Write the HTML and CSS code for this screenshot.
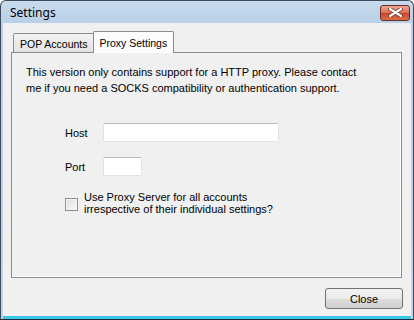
FILE: index.html
```html
<!doctype html>
<html lang="en">
<head>
    <meta charset="UTF-8">
    <title>Settings</title>
    <link rel="stylesheet" href="styles.css">
</head>
<body>
<div class="window">
    <div class="titlebar">
        <span class="title">Settings</span>
        <span class="close-x">
            <svg width="15" height="9" viewBox="0 0 15 9">
                <path d="M2 1 L13 8 M13 1 L2 8" stroke="#5a2a22" stroke-width="3.6" stroke-linecap="round"/>
                <path d="M2 1 L13 8 M13 1 L2 8" stroke="#fff" stroke-width="2.2" stroke-linecap="round"/>
            </svg>
        </span>
    </div>
    <div class="client">
        <div class="tabs">
            <div class="tab">POP Accounts</div>
            <div class="tab active">Proxy Settings</div>
        </div>
        <div class="panel">
            <p class="note">This version only contains support for a HTTP proxy. Please contact<br>me if you need a SOCKS compatibility or authentication support.</p>
            <div class="form">
                <label class="lbl">Host</label>
                <input class="field host" type="text">
                <label class="lbl">Port</label>
                <input class="field port" type="text">
                <span class="box"></span>
                <span class="check-text">Use Proxy Server for all accounts<br>irrespective of their individual settings?</span>
            </div>
        </div>
        <div class="footer">
            <button class="btn">Close</button>
        </div>
    </div>
</div>
</body>
</html>
```

FILE: styles.css
```css
body {
    margin: 0;
    font-family: "Liberation Sans", Arial, sans-serif;
    font-size: 11px;
    color: #000;
}

.window {
    width: 414px;
    height: 320px;
    box-sizing: border-box;
    border: 1px solid #3d4a5a;
    border-bottom-color: #1c2a38;
    border-radius: 6px 6px 0 0;
    background: linear-gradient(#c9dbee, #b9cfe7 22px, #bfd5ec 100%);
    display: flex;
    flex-direction: column;
    padding: 0 2px 0 2px;
}

.titlebar {
    height: 22px;
    display: flex;
    align-items: center;
    justify-content: space-between;
    padding: 0 1px 0 7px;
}

.title {
    font-family: "Noto Sans", "Liberation Sans", sans-serif;
    font-size: 12px;
    margin-top: 1px;
}

.close-x {
    width: 28px;
    height: 14px;
    border: 1px solid #6b2a22;
    border-radius: 3px;
    background: linear-gradient(#eba995, #d86d51 50%, #c8442a 51%, #d9704f);
    display: flex;
    align-items: center;
    justify-content: center;
    margin-top: 1px;
}

.client {
    flex: 1;
    background: #f0f0f0;
    border-bottom: 3px solid #3bc6ea;
    padding: 8px 8px 0 8px;
    display: flex;
    flex-direction: column;
}

.tabs {
    display: flex;
    align-items: flex-end;
    padding-left: 2px;
    height: 21px;
    position: relative;
    z-index: 1;
}

.tab {
    height: 19px;
    box-sizing: border-box;
    border: 1px solid #898c95;
    border-bottom: none;
    border-radius: 2px 2px 0 0;
    background: linear-gradient(#f3f3f3, #e3e3e3);
    padding: 3px 6px 0 6px;
    line-height: 14px;
    font-size: 10.5px;
    white-space: nowrap;
}

.tab.active {
    height: 22px;
    background: #fcfcfc;
    margin-left: -2px;
    margin-bottom: -1px;
    padding: 4px 6px 0 6px;
}

.panel {
    height: 226px;
    box-sizing: border-box;
    border: 1px solid #898c95;
    box-shadow: inset -1px -1px 0 #fff;
    padding: 11px 14px 0 14px;
    margin-right: 1px;
}

.note {
    margin: 0;
    line-height: 16px;
    font-size: 11px;
}

.form {
    display: grid;
    grid-template-columns: 38px auto;
    align-items: center;
    justify-items: start;
    row-gap: 15px;
    margin: 27px 0 0 39px;
}

.lbl {
    font-size: 11px;
}

.field {
    box-sizing: border-box;
    height: 19px;
    margin: 0;
    border: 1px solid #dfe3e8;
    border-top-color: #b5b9c0;
    border-radius: 2px;
    background: #fff;
    padding: 0;
}

.host {
    width: 176px;
}

.port {
    width: 39px;
}

.box {
    width: 13px;
    height: 13px;
    box-sizing: border-box;
    border: 1px solid #8f8f8f;
    background: linear-gradient(135deg, #dcdcdc, #fafafa);
    box-shadow: inset 0 0 0 1px #f4f4f4;
    margin-top: 2px;
}

.check-text {
    line-height: 12px;
    margin-left: -19px;
    font-size: 11px;
}

.footer {
    flex: 1;
    display: flex;
    justify-content: flex-end;
    align-items: flex-start;
    padding-top: 10px;
}

.btn {
    width: 78px;
    height: 21px;
    border: 1px solid #707070;
    border-radius: 3px;
    background: linear-gradient(#f2f2f2, #ebebeb 50%, #dddddd 51%, #cfcfcf);
    font-family: "Liberation Sans", Arial, sans-serif;
    font-size: 11px;
    color: #000;
    padding: 0;
}
```
